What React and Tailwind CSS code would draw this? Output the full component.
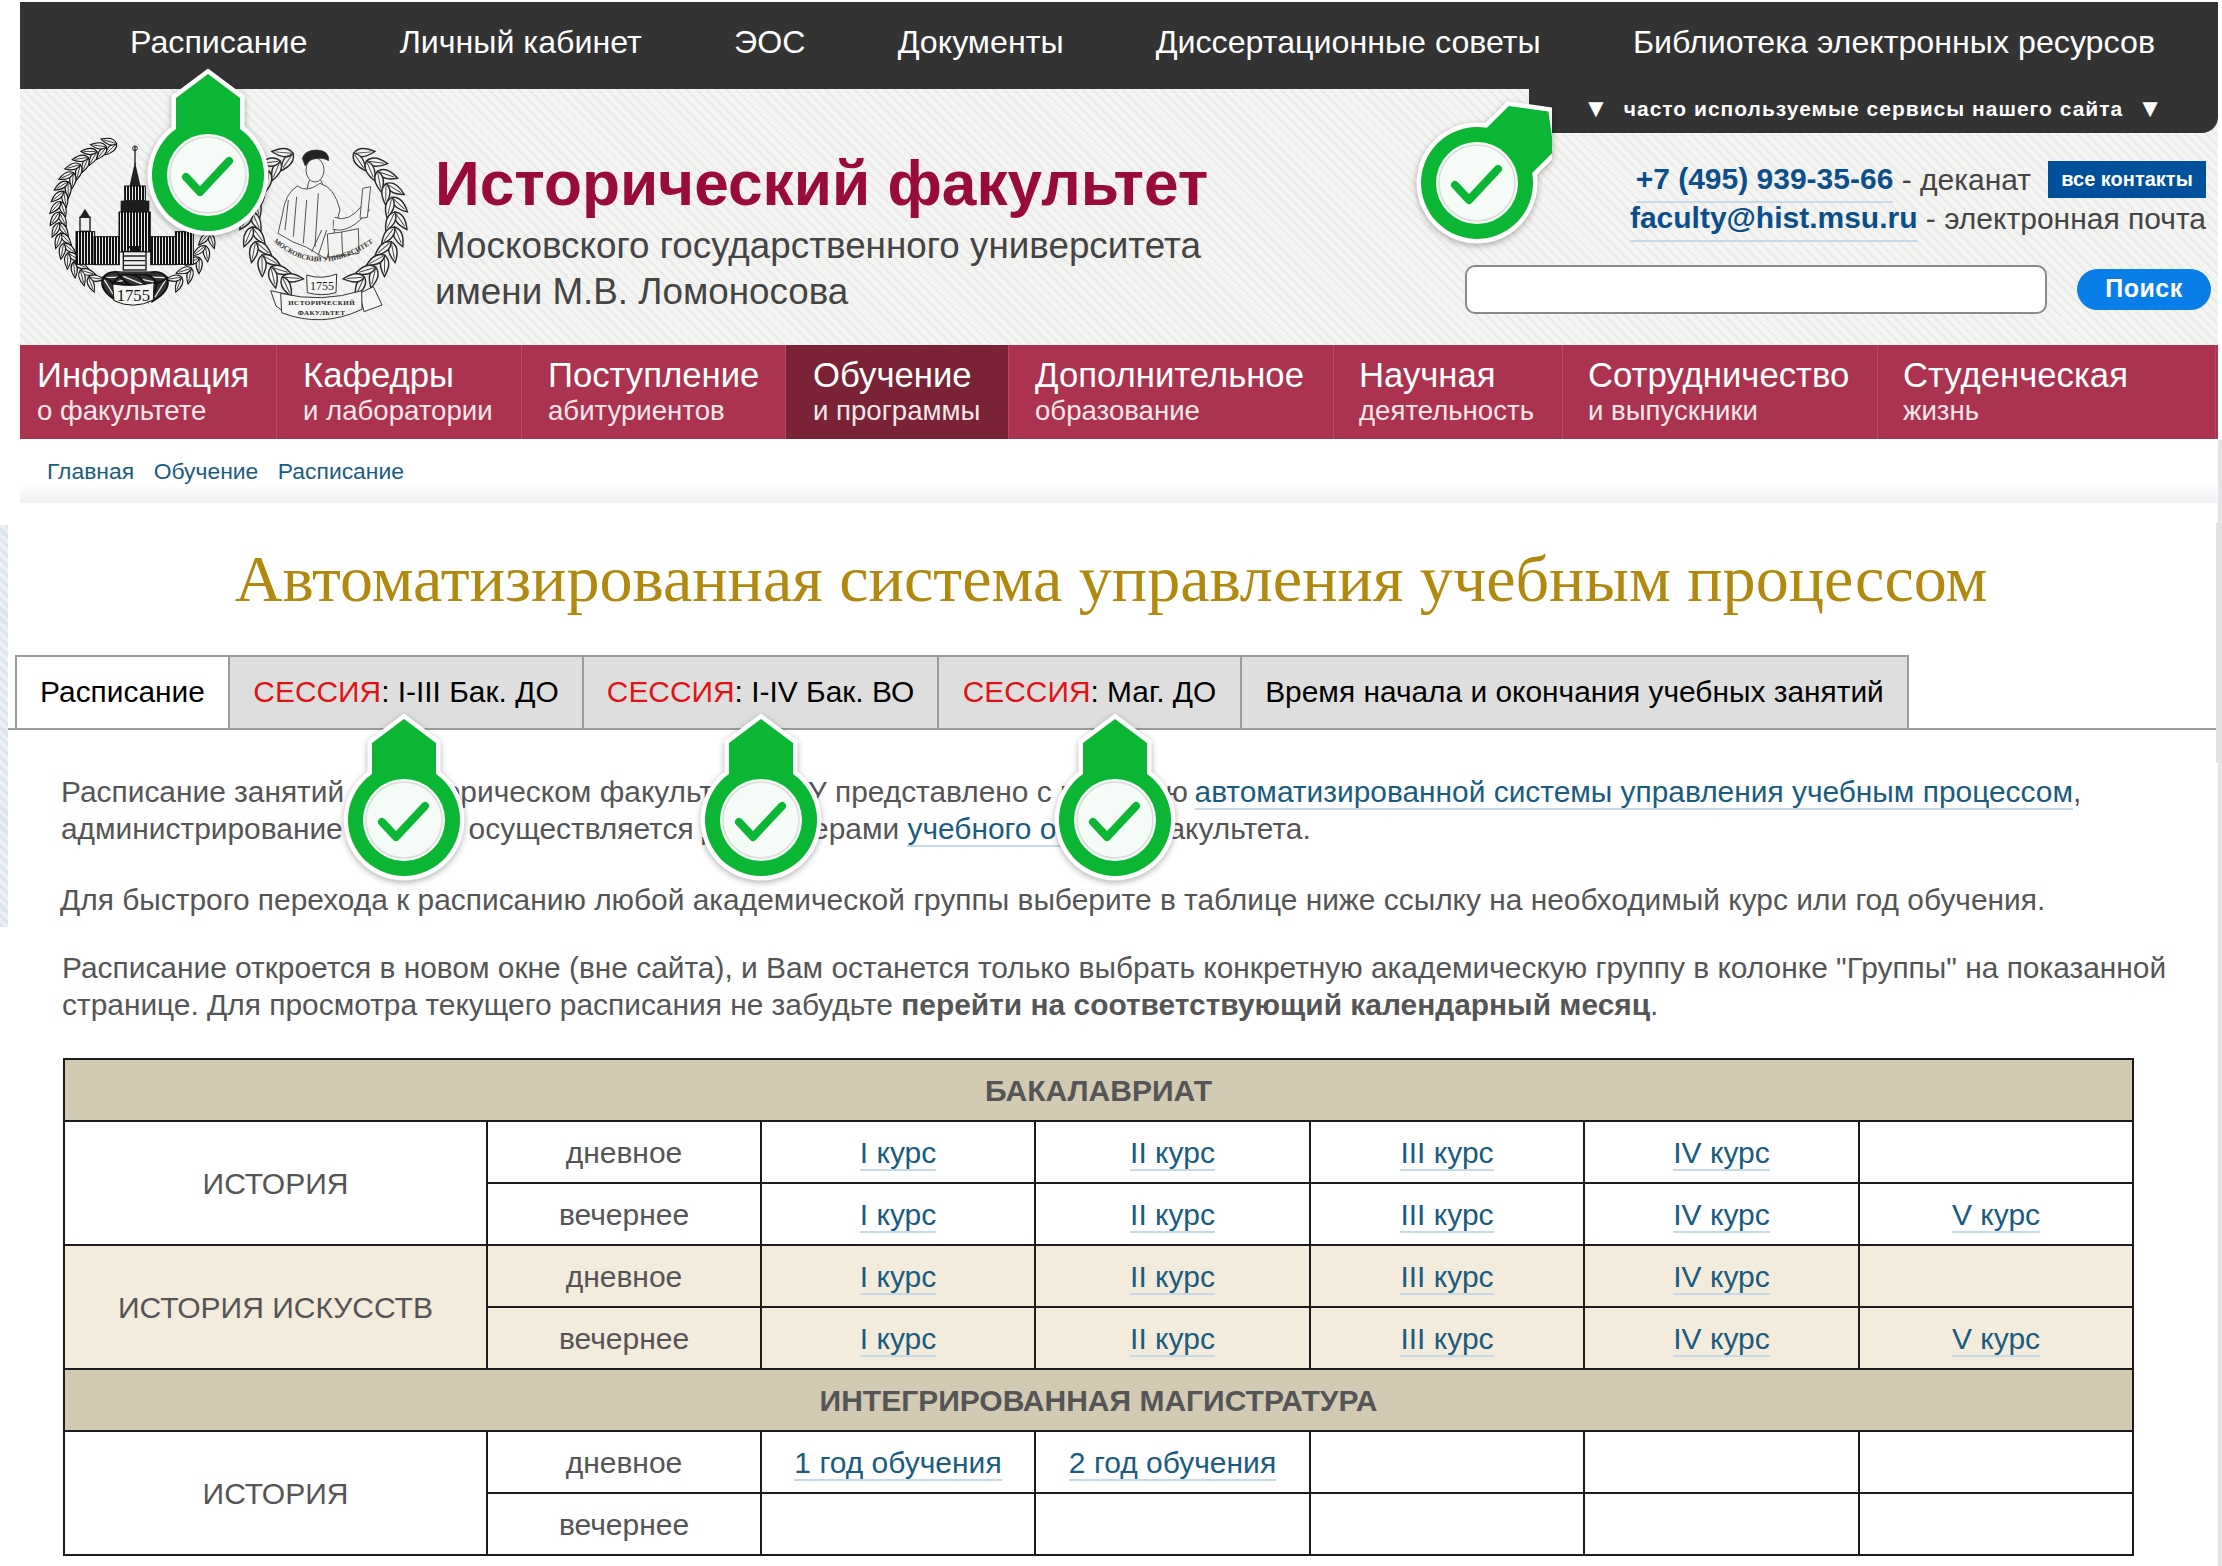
const topNav = ["Расписание", "Личный кабинет", "ЭОС", "Документы", "Диссертационные советы", "Библиотека электронных ресурсов"];

const mainNav = [
  { a: "Информация", b: "о факультете", w: "w-[257px]", pl: "pl-[17px]" },
  { a: "Кафедры", b: "и лаборатории", w: "w-[245px]", pl: "pl-[26px]" },
  { a: "Поступление", b: "абитуриентов", w: "w-[264px]", pl: "pl-[26px]" },
  { a: "Обучение", b: "и программы", w: "w-[223px]", pl: "pl-[27px]", active: true },
  { a: "Дополнительное", b: "образование", w: "w-[325px]", pl: "pl-[26px]" },
  { a: "Научная", b: "деятельность", w: "w-[229px]", pl: "pl-[25px]" },
  { a: "Сотрудничество", b: "и выпускники", w: "w-[315px]", pl: "pl-[25px]" },
  { a: "Студенческая", b: "жизнь", w: "w-[338px]", pl: "pl-[25px]" },
];

function Wreath({ cx, cy, r, from, to, n, fill, stroke, vein, size = 1 }) {
  const leaves = [];
  for (let i = 0; i < n; i++) {
    const deg = from + ((to - from) * i) / (n - 1);
    const t = (deg * Math.PI) / 180;
    const x = cx + r * Math.cos(t);
    const y = cy + r * Math.sin(t);
    const dir = deg + (to > from ? 90 : -90);
    [-30, 30].forEach((off, k) => {
      leaves.push(
        <g key={i + "-" + k} transform={`translate(${x} ${y}) rotate(${dir + off}) scale(${size})`}>
          <path d="M0 0Q14 -17 44 0Q14 17 0 0Z" fill={fill} stroke={stroke} strokeWidth="3" />
          <path d="M4 0L36 0" stroke={vein} strokeWidth="2" />
        </g>
      );
    });
  }
  return <g>{leaves}</g>;
}

function Emblems() {
  return (
    <svg viewBox="0 0 1140 600" className="w-[380px] h-[200px] shrink-0 ml-[20px] mt-[41px]">
      <defs>
        <pattern id="bars" width="9" height="10" patternUnits="userSpaceOnUse">
          <rect width="9" height="10" fill="#eee" />
          <rect width="6" height="10" fill="#111" />
        </pattern>
      </defs>
      {/* левая эмблема: здание МГУ */}
      <Wreath cx={285} cy={262} r={228} from={256} to={128} n={17} fill="#f0f0ee" stroke="#111" vein="#111" size={1.1} />
      <Wreath cx={285} cy={262} r={228} from={12} to={52} n={5} fill="#f0f0ee" stroke="#111" vein="#111" size={1.1} />
      <Wreath cx={285} cy={262} r={205} from={118} to={98} n={3} fill="#333" stroke="#111" vein="#eee" size={1.9} />
      <Wreath cx={285} cy={262} r={205} from={62} to={82} n={3} fill="#333" stroke="#111" vein="#eee" size={1.9} />
      <g>
        <path d="M285 48V105" stroke="#222" strokeWidth="4" />
        <circle cx="285" cy="55" r="7" fill="none" stroke="#222" strokeWidth="3" />
        <path d="M285 95L302 170H268Z" fill="#222" />
        <rect x="254" y="168" width="62" height="44" fill="url(#bars)" stroke="#111" strokeWidth="3" />
        <rect x="242" y="212" width="86" height="36" fill="#1c1c1c" />
        <rect x="237" y="246" width="94" height="120" fill="url(#bars)" stroke="#111" strokeWidth="3" />
        <rect x="250" y="365" width="68" height="55" fill="#eee" stroke="#111" strokeWidth="4" />
        <path d="M265 348H305L295 366H275Z" fill="#111" />
        <path d="M252 378H316M252 392H316M252 406H316" stroke="#222" strokeWidth="4" />
        <rect x="108" y="305" width="56" height="98" fill="url(#bars)" stroke="#111" strokeWidth="3" />
        <rect x="120" y="262" width="30" height="42" fill="#eee" stroke="#111" strokeWidth="4" />
        <path d="M135 236L152 264H118Z" fill="#222" />
        <rect x="162" y="320" width="76" height="84" fill="url(#bars)" stroke="#111" strokeWidth="3" />
        <rect x="332" y="320" width="76" height="84" fill="url(#bars)" stroke="#111" strokeWidth="3" />
        <rect x="406" y="305" width="54" height="98" fill="url(#bars)" stroke="#111" strokeWidth="3" />
        <rect x="236" y="424" width="96" height="8" fill="#333" />
        <path d="M218 462Q280 472 342 458L340 510Q280 540 222 512Z" fill="#f6f6f4" stroke="#111" strokeWidth="3" />
        <text x="280" y="513" textAnchor="middle" fontFamily="Liberation Serif, serif" fontSize="50" fill="#111">1755</text>
      </g>
      {/* правая эмблема: фигура и лента */}
      <Wreath cx={850} cy={265} r={215} from={245} to={125} n={11} fill="#f5f5f3" stroke="#2a2a2a" vein="#444" size={1.45} />
      <Wreath cx={850} cy={265} r={215} from={-65} to={55} n={11} fill="#f5f5f3" stroke="#2a2a2a" vein="#444" size={1.45} />
      <g fill="none" stroke="#333" strokeWidth="2.5">
        <ellipse cx="825" cy="120" rx="27" ry="36" fill="#f2f2f0" />
        <path d="M787 85Q795 60 830 60Q868 62 866 92Q850 82 826 86Q805 88 796 108Z" fill="#222" />
        <path d="M808 150L800 180M842 150L852 172" />
        <path d="M772 168Q735 190 727 255L714 310Q760 340 800 352L860 388L884 300L900 240Q884 172 840 160Q800 190 772 168Z" fill="#f2f2f0" />
        <path d="M745 210L735 300M770 200L760 320M800 210L790 340M835 190L825 350M860 300L835 375M845 300L815 365M880 270L880 300" />
        <path d="M884 262Q925 280 968 225L988 240Q930 312 880 298" fill="#f2f2f0" />
        <path d="M968 175L992 170L982 262L960 265Z" fill="#f2f2f0" />
        <path d="M862 312L905 306L955 296L957 370L866 382Z" fill="#f2f2f0" />
        <path d="M905 306L908 378" />
      </g>
      <path id="arcName" d="M704 338Q835 450 996 340" fill="none" />
      <text fontFamily="Liberation Serif, serif" fontSize="21" fontWeight="700" fill="#333">
        <textPath href="#arcName" startOffset="50%" textAnchor="middle">МОСКОВСКИЙ УНИВЕРСИТЕТ</textPath>
      </text>
      <path d="M800 435Q845 450 890 432L888 488Q845 500 802 488Z" fill="#f5f5f3" stroke="#333" strokeWidth="3" />
      <text x="846" y="481" textAnchor="middle" fontFamily="Liberation Serif, serif" fontSize="36" fill="#222">1755</text>
      <path d="M692 482L738 492L735 548L708 528ZM1000 470L1026 525L972 545L958 490Z" fill="#f5f5f3" stroke="#333" strokeWidth="3" />
      <path d="M722 490Q845 520 965 482L966 538Q845 595 725 548Z" fill="#f5f5f3" stroke="#333" strokeWidth="3" />
      <text x="845" y="526" textAnchor="middle" fontFamily="Liberation Serif, serif" fontSize="21" fontWeight="700" letterSpacing="1.5" fill="#222">ИСТОРИЧЕСКИЙ</text>
      <text x="845" y="555" textAnchor="middle" fontFamily="Liberation Serif, serif" fontSize="21" fontWeight="700" letterSpacing="1.5" fill="#222">ФАКУЛЬТЕТ</text>
    </svg>
  );
}

// зелёная метка; anchor — центр кружка
function Pin({ className, rotate = 0 }) {
  return (
    <svg viewBox="-75 -120 150 200" className={`absolute w-[150px] h-[200px] drop-shadow-[0_2px_3px_rgba(0,0,0,0.3)] ${className}`}>
      <g transform={`rotate(${rotate})`}>
        <path d="M0 -101L32 -77V-46A56 56 0 1 1 -32 -46V-77Z" fill="#fff" stroke="#fff" strokeWidth="9" strokeMiterlimit="4" />
        <path d="M0 -101L32 -77V-46A56 56 0 1 1 -32 -46V-77Z" fill="#0bb634" />
      </g>
      <circle r="41" fill="#fff" fillOpacity="0.96" />
      <circle r="38" fill="none" stroke="#dcdcdc" strokeWidth="1.5" />
      <path d="M-22 2L-8 17L21 -14" fill="none" stroke="#0bb634" strokeWidth="8" strokeLinecap="round" strokeLinejoin="round" />
    </svg>
  );
}

function L({ children }) {
  return <a className="text-[#1a5c80] border-b-2 border-[#c5d9e8]">{children}</a>;
}

function Tab({ w, active, red, rest }) {
  return (
    <div className={`${w} h-[75px] -mr-[2px] border-2 border-[#9b9b9b] flex items-center justify-center shrink-0 text-[29.9px] text-black ${active ? "bg-white" : "bg-[#dedede]"}`}>
      {red && <span className="text-[#e01414]">{red}</span>}
      {rest}
    </div>
  );
}

const td = "border-2 border-[#1c1c1c] text-center text-[30px] text-[#555] p-0";

function Section({ title }) {
  return (
    <tr className="h-[62px] bg-[#d2cab2]">
      <td colSpan={7} className={`${td} font-bold`}>{title}</td>
    </tr>
  );
}

function Group({ name, tint, rows }) {
  return rows.map((cells, i) => (
    <tr key={i} className={`h-[62px] ${tint ? "bg-[#f3ebdc]" : "bg-white"}`}>
      {i === 0 && <td rowSpan={rows.length} className={td}>{name}</td>}
      <td className={td}>{i === 0 ? "дневное" : "вечернее"}</td>
      {cells.map((c, k) => (
        <td key={k} className={td}>{c && <L>{c}</L>}</td>
      ))}
    </tr>
  ));
}

export default function App() {
  const five = ["I курс", "II курс", "III курс", "IV курс", ""];
  const five2 = ["I курс", "II курс", "III курс", "IV курс", "V курс"];
  return (
    <div className="relative h-screen overflow-hidden bg-white font-['Liberation_Sans',Arial,sans-serif]">
      <div className="absolute left-0 top-[525px] w-[8px] h-[402px] bg-[repeating-linear-gradient(45deg,#dfe4ea_0,#dfe4ea_3px,#eceff3_3px,#eceff3_7px)]" />
      <div className="absolute right-0 top-[440px] w-[4px] h-[1126px] bg-[#e4e4e8]" />
      <div className="absolute right-0 top-[523px] w-[6px] h-[240px] bg-[#e2e2e4]" />

      {/* шапка */}
      <div className="ml-[20px] mr-[4px] mt-[2px]">
        <div className="h-[87px] bg-[#333] flex items-center gap-[92.2px] pl-[110px] pb-[6px] text-[32.2px] text-white whitespace-nowrap">
          {topNav.map((t) => <span key={t}>{t}</span>)}
        </div>
        <div className="h-[256px] flex justify-between bg-[#f3f3f1] bg-[repeating-linear-gradient(45deg,#eaeae8_0,#eaeae8_2px,#f4f4f2_2px,#f4f4f2_7px)]">
          <div className="flex">
            <Emblems />
            <div className="ml-[15px] pt-[57px]">
              <div className="text-[62.2px] leading-[76px] font-bold text-[#9a0b3d] whitespace-nowrap">Исторический факультет</div>
              <div className="mt-[1px] text-[36.8px] leading-[46px] text-[#444] whitespace-nowrap">
                Московского государственного университета<br />имени М.В. Ломоносова
              </div>
            </div>
          </div>
          <div className="w-[757px] flex flex-col">
            <div className="self-end w-[689px] h-[44px] bg-[#333] rounded-b-[16px] flex items-center justify-center gap-[14px] pb-[5px] text-white font-bold text-[21px] tracking-[1px] whitespace-nowrap">
              <span className="text-[26px]">▼</span>
              <span>часто используемые сервисы нашего сайта</span>
              <span className="text-[26px]">▼</span>
            </div>
            <div className="flex justify-end items-center pr-[12px] mt-[26px] h-[40px] text-[30px] text-[#444] whitespace-nowrap">
              <a className="font-bold text-[#0b4f8a] border-b-2 border-[#c5d9e8]">+7 (495) 939-35-66</a>
              <span>&nbsp;- деканат</span>
              <span className="ml-[17px] w-[158px] h-[37px] bg-[#00509c] text-white font-bold text-[20px] flex items-center justify-center">все контакты</span>
            </div>
            <div className="flex justify-end pr-[12px] mt-[-1px] h-[40px] items-center text-[30px] text-[#444] whitespace-nowrap">
              <a className="font-bold text-[#0b4f8a] border-b-2 border-[#c5d9e8]">faculty@hist.msu.ru</a>
              <span>&nbsp;- электронная почта</span>
            </div>
            <div className="flex items-center mt-[27px] pl-[4px]">
              <div className="w-[582px] h-[49px] rounded-[10px] bg-white border-2 border-[#8a8a8a]" />
              <div className="ml-[30px] w-[134px] h-[41px] pb-[2px] rounded-full bg-[#0a7ee8] text-white font-bold text-[25px] tracking-[0.5px] flex items-center justify-center">Поиск</div>
            </div>
          </div>
        </div>
        {/* главное меню */}
        <div className="h-[94px] bg-[#ac3350] flex text-white whitespace-nowrap">
          {mainNav.map((m) => (
            <div key={m.a} className={`${m.w} ${m.pl} border-r border-[#b94a66] pt-[10px] shrink-0 ${m.active ? "bg-[#7a2336]" : ""}`}>
              <div className="text-[34.7px] leading-[40px]">{m.a}</div>
              <div className="text-[27.6px] leading-[31px] text-[#f5e6ea]">{m.b}</div>
            </div>
          ))}
        </div>
        <div className="h-[64px] bg-gradient-to-b from-white from-70% to-[#eef0f2] flex items-center gap-[19.5px] pl-[27px] text-[22.9px] text-[#1a5c80]">
          <span>Главная</span>
          <span>Обучение</span>
          <span>Расписание</span>
        </div>
      </div>

      {/* содержимое */}
      <div className="h-[152px] flex items-center justify-center font-['Liberation_Serif',serif] text-[66.1px] text-[#b0890e] whitespace-nowrap">
        Автоматизированная система управления учебным процессом
      </div>

      <div className="pl-[15px] h-[75px] border-b-2 border-[#9b9b9b] flex">
        <Tab w="w-[215px]" active rest="Расписание" />
        <Tab w="w-[356px]" red="СЕССИЯ" rest=": I-III Бак. ДО" />
        <Tab w="w-[357px]" red="СЕССИЯ" rest=": I-IV Бак. ВО" />
        <Tab w="w-[305px]" red="СЕССИЯ" rest=": Маг. ДО" />
        <Tab w="w-[669px]" rest="Время начала и окончания учебных занятий" />
      </div>

      <div className="text-[29.9px] leading-[37px] text-[#555] whitespace-nowrap">
        <p className="mt-[43px] ml-[61px]">
          Расписание занятий на Историческом факультете МГУ представлено с <span className="tracking-[-0.8px]">помощью </span><L>автоматизированной системы управления учебным процессом</L>,<br />
          администрирование которой осуществляется диспетчерами <L>учебного отдела</L> факультета.
        </p>
        <p className="mt-[34px] ml-[60px]">
          Для быстрого перехода к расписанию любой академической группы выберите в таблице ниже ссылку на необходимый курс или год обучения.
        </p>
        <p className="mt-[31px] ml-[62px]">
          Расписание откроется в новом окне (вне сайта), и Вам останется только выбрать конкретную академическую группу в колонке "Группы" на показанной<br />
          странице. Для просмотра текущего расписания не забудьте <b>перейти на соответствующий календарный месяц</b>.
        </p>
      </div>

      <table className="mt-[35px] ml-[63px] w-[2069px] table-fixed border-collapse">
        <colgroup>
          <col className="w-[423px]" />
          <col className="w-[274px]" />
          <col className="w-[274px]" />
          <col className="w-[275px]" />
          <col className="w-[274px]" />
          <col className="w-[275px]" />
          <col className="w-[274px]" />
        </colgroup>
        <tbody>
          <Section title="БАКАЛАВРИАТ" />
          <Group name="ИСТОРИЯ" rows={[five, five2]} />
          <Group name="ИСТОРИЯ ИСКУССТВ" tint rows={[five, five2]} />
          <Section title="ИНТЕГРИРОВАННАЯ МАГИСТРАТУРА" />
          <Group name="ИСТОРИЯ" rows={[["1 год обучения", "2 год обучения", "", "", ""], ["", "", "", "", ""]]} />
        </tbody>
      </table>

      <Pin className="left-[133px] top-[55px]" />
      <Pin className="left-[1402px] top-[63px]" rotate={45} />
      <Pin className="left-[329px] top-[700px]" />
      <Pin className="left-[686px] top-[700px]" />
      <Pin className="left-[1040px] top-[700px]" />
    </div>
  );
}
